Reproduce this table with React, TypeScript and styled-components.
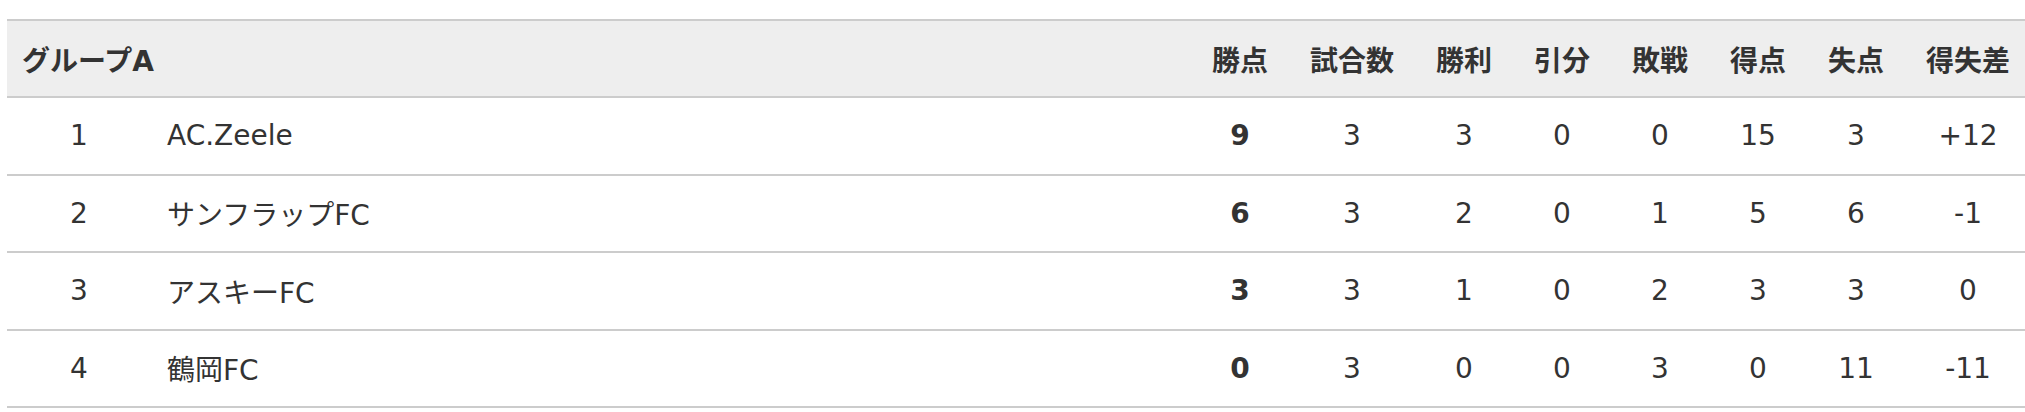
import styled, { createGlobalStyle } from "styled-components";

interface ITeam {
  rank: number;
  name: string;
  points: number;
  played: number;
  won: number;
  drawn: number;
  lost: number;
  goalsFor: number;
  goalsAgainst: number;
  diff: string;
}

const teams: ITeam[] = [
  { rank: 1, name: "AC.Zeele", points: 9, played: 3, won: 3, drawn: 0, lost: 0, goalsFor: 15, goalsAgainst: 3, diff: "+12" },
  { rank: 2, name: "サンフラップFC", points: 6, played: 3, won: 2, drawn: 0, lost: 1, goalsFor: 5, goalsAgainst: 6, diff: "-1" },
  { rank: 3, name: "アスキーFC", points: 3, played: 3, won: 1, drawn: 0, lost: 2, goalsFor: 3, goalsAgainst: 3, diff: "0" },
  { rank: 4, name: "鶴岡FC", points: 0, played: 3, won: 0, drawn: 0, lost: 3, goalsFor: 0, goalsAgainst: 11, diff: "-11" },
];

const headings = ["勝点", "試合数", "勝利", "引分", "敗戦", "得点", "失点", "得失差"];

export default function App() {
  return (
    <>
      <GlobalStyle />
      <Table>
        <thead>
          <tr>
            <GroupHead colSpan={2}>グループA</GroupHead>
            {headings.map((h) => (
              <StatHead key={h}>{h}</StatHead>
            ))}
          </tr>
        </thead>
        <tbody>
          {teams.map((team) => (
            <Row key={team.rank}>
              <RankCell>{team.rank}</RankCell>
              <NameCell>{team.name}</NameCell>
              <StatCell $bold>{team.points}</StatCell>
              <StatCell>{team.played}</StatCell>
              <StatCell>{team.won}</StatCell>
              <StatCell>{team.drawn}</StatCell>
              <StatCell>{team.lost}</StatCell>
              <StatCell>{team.goalsFor}</StatCell>
              <StatCell>{team.goalsAgainst}</StatCell>
              <StatCell>{team.diff}</StatCell>
            </Row>
          ))}
        </tbody>
      </Table>
    </>
  );
}

const GlobalStyle = createGlobalStyle`
  body {
    margin: 19px 0 0 7px;
    overflow: hidden;
    background: #fff;
    color: #333;
    font-family: "DejaVu Sans", "Noto Sans CJK JP", sans-serif;
  }
`;

const Table = styled.table`
  width: calc(100% + 6px);
  border-collapse: collapse;
  font-size: 28px;
  border-top: 2px solid #ccc;
`;

const GroupHead = styled.th`
  height: 75px;
  padding: 0 15px;
  background: #eee;
  text-align: left;
  font-weight: 700;
  border-bottom: 2px solid #ccc;
  white-space: nowrap;
`;

const StatHead = styled.th`
  height: 75px;
  padding: 0 21px;
  background: #eee;
  text-align: center;
  font-weight: 700;
  border-bottom: 2px solid #ccc;
  white-space: nowrap;
`;

const Row = styled.tr`
  height: 77.5px;
  border-bottom: 2px solid #ccc;
`;

const RankCell = styled.td`
  width: 144px;
  min-width: 144px;
  padding: 0;
  text-align: center;
`;

const NameCell = styled.td`
  width: 100%;
  padding: 0 16px;
  text-align: left;
  white-space: nowrap;
`;

const StatCell = styled.td<{ $bold?: boolean }>`
  padding: 0 21px;
  text-align: center;
  font-weight: ${(p) => (p.$bold ? 700 : 400)};
  white-space: nowrap;
`;
